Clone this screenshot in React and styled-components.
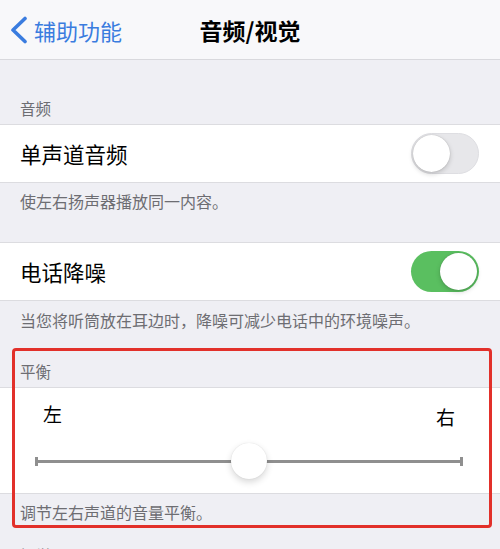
import React from "react";
import styled, { createGlobalStyle } from "styled-components";

const Global = createGlobalStyle`
  html, body { margin: 0; padding: 0; }
  body {
    background: #efeff4;
    font-family: "Noto Sans CJK SC", "Noto Sans", sans-serif;
    overflow: hidden;
  }
`;

const Page = styled.div`
  position: relative;
  width: 500px;
  height: 549px;
  overflow: hidden;
  background: #efeff4;
`;

const NavBar = styled.div`
  height: 59px;
  background: #f8f8fa;
  border-bottom: 1px solid #d9d9dd;
  display: flex;
  align-items: center;
  position: relative;
`;

const Back = styled.div`
  display: flex;
  align-items: center;
  gap: 6px;
  padding-left: 10px;
  color: #3a7cdf;
  font-size: 22px;
  line-height: 30px;
`;

const Title = styled.div`
  position: absolute;
  left: 0;
  right: 0;
  text-align: center;
  font-size: 23px;
  font-weight: 700;
  color: #000;
  line-height: 30px;
  pointer-events: none;
`;

const Header = styled.div`
  padding: ${(p) => p.$top}px 20px ${(p) => p.$bottom}px;
  font-size: 15.5px;
  line-height: 20px;
  color: #6d6d72;
`;

const Footer = styled.div`
  padding: ${(p) => p.$top}px 20px ${(p) => p.$bottom}px;
  font-size: 16px;
  line-height: 20px;
  color: #6d6d72;
`;

const Row = styled.div`
  height: 57px;
  background: #fff;
  border-top: 1px solid #dcdce0;
  border-bottom: 1px solid #dcdce0;
  display: flex;
  align-items: center;
  justify-content: space-between;
  padding: 0 21px 0 20px;
`;

const RowLabel = styled.div`
  font-size: 21.5px;
  color: #000;
  line-height: 30px;
`;

const Switch = styled.div`
  position: relative;
  width: 68px;
  height: 41px;
  border-radius: 21px;
  box-sizing: border-box;
  background: ${(p) => (p.$on ? "#5abf60" : "#e7e7ea")};
  border: ${(p) => (p.$on ? "none" : "1.5px solid #dedee2")};
`;

const Knob = styled.div`
  position: absolute;
  top: ${(p) => (p.$on ? 2 : 0.5)}px;
  left: ${(p) => (p.$on ? 29 : 0.5)}px;
  width: 37px;
  height: 37px;
  border-radius: 50%;
  background: #fff;
  box-shadow: 0 2px 5px rgba(0, 0, 0, 0.18), 0 0 1px rgba(0, 0, 0, 0.25);
`;

const BalanceBlock = styled.div`
  background: #fff;
  border-top: 1px solid #dcdce0;
  border-bottom: 1px solid #dcdce0;
  height: 105px;
  display: flex;
  flex-direction: column;
`;

const Labels = styled.div`
  display: flex;
  justify-content: space-between;
  padding: 14px 45px 0 43px;
  height: 30px;
  font-size: 19px;
  color: #000;
  line-height: 24px;
`;

const EndLabel = styled.span`
  margin-top: ${(p) => p.$drop || 0}px;
`;

const SliderWrap = styled.div`
  padding: 0 38px 0 35px;
  margin-top: 11px;
  height: 36px;
  display: flex;
  align-items: center;
`;

const Track = styled.div`
  position: relative;
  flex: 1;
  height: 3px;
  background: #8f8f8f;
`;

const Cap = styled.div`
  position: absolute;
  top: -3px;
  width: 3px;
  height: 9px;
  background: #8f8f8f;
  ${(p) => (p.$right ? "right: -1px;" : "left: 0;")}
`;

const Thumb = styled.div`
  position: absolute;
  top: 50%;
  left: 50%;
  width: 36px;
  height: 36px;
  margin: -18px 0 0 -18px;
  border-radius: 50%;
  background: #fff;
  box-shadow: 0 3px 7px rgba(0, 0, 0, 0.16), 0 0 1px rgba(0, 0, 0, 0.15);
`;

const Highlight = styled.div`
  position: absolute;
  left: 12px;
  top: 348px;
  width: 480px;
  height: 180px;
  box-sizing: border-box;
  border: 3px solid #e2302a;
  border-radius: 4px;
  pointer-events: none;
`;

function Chevron() {
  return (
    <svg width="18" height="28" viewBox="0 0 18 28">
      <polyline
        points="15,2.5 3,14 15,25.5"
        fill="none"
        stroke="#3a7cdf"
        strokeWidth="3.6"
        strokeLinecap="round"
        strokeLinejoin="round"
      />
    </svg>
  );
}

export default function App() {
  return (
    <Page>
      <Global />
      <NavBar>
        <Back>
          <Chevron />
          <span>辅助功能</span>
        </Back>
        <Title>音频/视觉</Title>
      </NavBar>

      <Header $top={38} $bottom={6}>音频</Header>
      <Row>
        <RowLabel>单声道音频</RowLabel>
        <Switch>
          <Knob />
        </Switch>
      </Row>
      <Footer $top={8} $bottom={31}>使左右扬声器播放同一内容。</Footer>

      <Row>
        <RowLabel>电话降噪</RowLabel>
        <Switch $on>
          <Knob $on />
        </Switch>
      </Row>
      <Footer $top={9} $bottom={0}>当您将听筒放在耳边时，降噪可减少电话中的环境噪声。</Footer>

      <Header $top={31} $bottom={6}>平衡</Header>
      <BalanceBlock>
        <Labels>
          <EndLabel>左</EndLabel>
          <EndLabel $drop={3}>右</EndLabel>
        </Labels>
        <SliderWrap>
          <Track>
            <Cap />
            <Cap $right />
            <Thumb />
          </Track>
        </SliderWrap>
      </BalanceBlock>
      <Footer $top={8} $bottom={0}>调节左右声道的音量平衡。</Footer>
      <Header $top={23} $bottom={6}>视觉</Header>

      <Highlight />
    </Page>
  );
}
